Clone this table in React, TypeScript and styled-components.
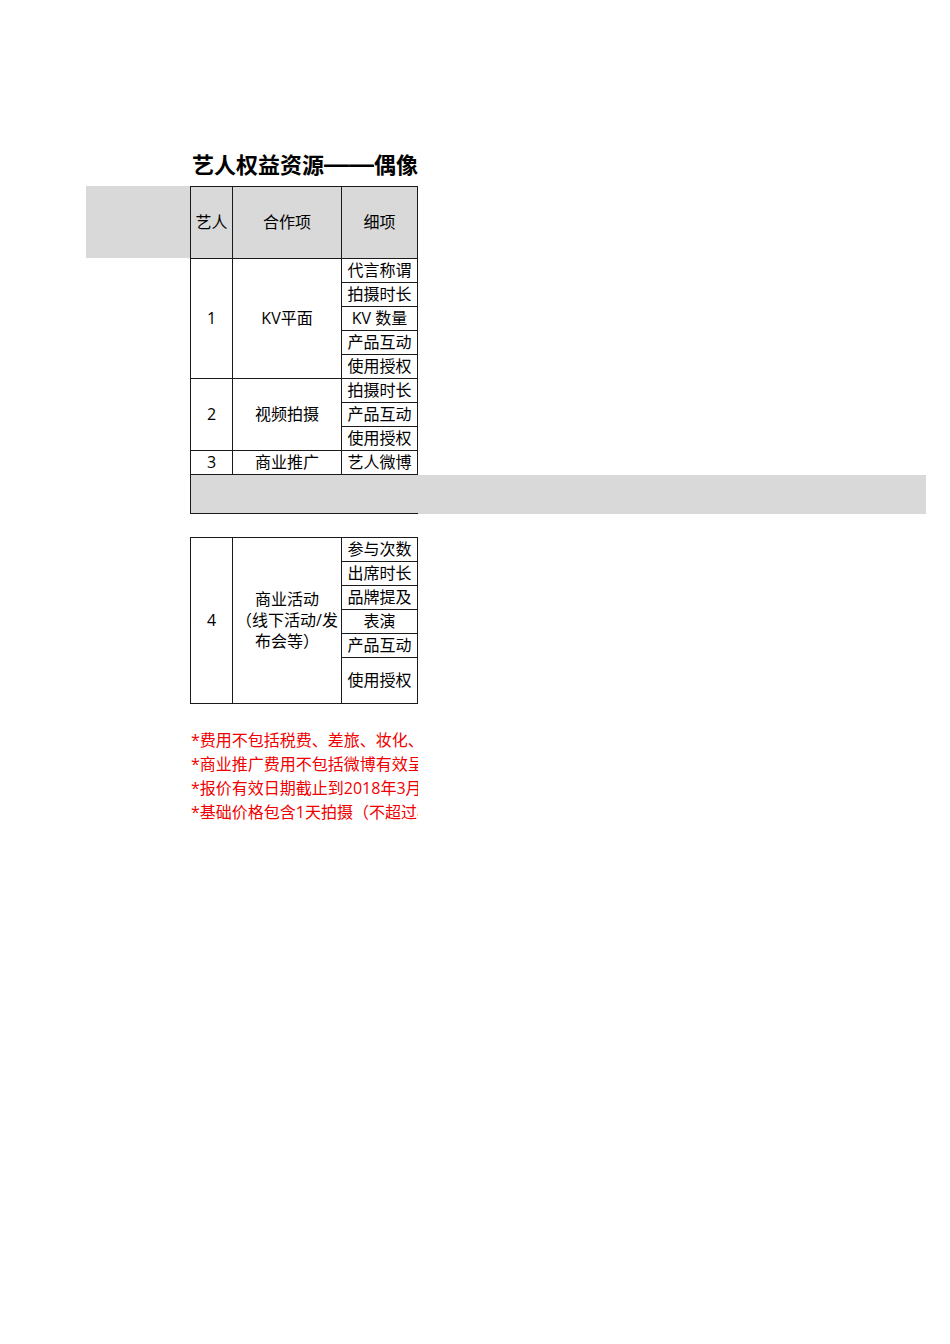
import styled, { createGlobalStyle } from "styled-components";

const GlobalStyle = createGlobalStyle`
  body {
    margin: 0;
    background: #fff;
    font-family: "Open Sans", "Noto Sans CJK SC", sans-serif;
    color: #000;
  }
`;

const Page = styled.div`
  padding: 150px 0 0 86px;
  width: 950px;
  height: 1344px;
  box-sizing: border-box;
`;

const Title = styled.div`
  margin-left: 104px;
  padding-left: 2px;
  width: 228px;
  height: 36px;
  box-sizing: border-box;
  overflow: hidden;
  white-space: nowrap;
  font-family: "Noto Sans CJK SC", sans-serif;
  font-size: 22px;
  font-weight: 700;
  line-height: 26px;
`;

const Dash = styled.span`
  font-family: "Liberation Sans", sans-serif;
  font-size: 25px;
  font-weight: 700;
`;

const TableRow = styled.div`
  display: flex;
  align-items: flex-start;
`;

const Shade = styled.div`
  width: 104px;
  height: 72px;
  background: #d9d9d9;
`;

const Grid = styled.div<{ $rows: string; $offset?: boolean }>`
  display: grid;
  grid-template-columns: 42px 109px 76px;
  grid-template-rows: ${(p) => p.$rows};
  width: 228px;
  box-sizing: border-box;
  border-top: 1px solid #1a1a1a;
  border-left: 1px solid #1a1a1a;
  margin-left: ${(p) => (p.$offset ? "104px" : "0")};
`;

const Cell = styled.div<{ $span?: number; $shade?: boolean }>`
  grid-row: span ${(p) => p.$span ?? 1};
  display: flex;
  align-items: center;
  justify-content: center;
  text-align: center;
  box-sizing: border-box;
  border-right: 1px solid #1a1a1a;
  border-bottom: 1px solid #1a1a1a;
  background: ${(p) => (p.$shade ? "#d9d9d9" : "#fff")};
  font-size: 16px;
  line-height: 21px;
  white-space: nowrap;
  overflow: hidden;
`;

const Band = styled.div`
  margin-left: 104px;
  width: 736px;
  height: 39px;
  background: #d9d9d9;
`;

const BandCell = styled.div`
  width: 228px;
  height: 100%;
  box-sizing: border-box;
  border-left: 1px solid #1a1a1a;
  border-bottom: 1px solid #1a1a1a;
`;

const Gap = styled.div`
  height: 23px;
`;

const Notes = styled.div`
  margin: 24px 0 0 104px;
  width: 228px;
  overflow: hidden;
  white-space: nowrap;
  padding-left: 1px;
  box-sizing: border-box;
`;

const Note = styled.div`
  color: #f00000;
  font-size: 16px;
  line-height: 24px;
`;

const notes = [
  "*费用不包括税费、差旅、妆化、造型等费用",
  "*商业推广费用不包括微博有效呈现的相关费用",
  "*报价有效日期截止到2018年3月31日",
  "*基础价格包含1天拍摄（不超过8小时）",
];

export default function App() {
  return (
    <Page>
      <GlobalStyle />
      <Title>
        艺人权益资源<Dash>——</Dash>偶像
      </Title>
      <TableRow>
        <Shade />
        <Grid $rows="72px repeat(9, 24px)">
          <Cell $shade>艺人</Cell>
          <Cell $shade>合作项</Cell>
          <Cell $shade>细项</Cell>

          <Cell $span={5}>1</Cell>
          <Cell $span={5}>KV平面</Cell>
          <Cell>代言称谓</Cell>
          <Cell>拍摄时长</Cell>
          <Cell>KV 数量</Cell>
          <Cell>产品互动</Cell>
          <Cell>使用授权</Cell>

          <Cell $span={3}>2</Cell>
          <Cell $span={3}>视频拍摄</Cell>
          <Cell>拍摄时长</Cell>
          <Cell>产品互动</Cell>
          <Cell>使用授权</Cell>

          <Cell>3</Cell>
          <Cell>商业推广</Cell>
          <Cell>艺人微博</Cell>
        </Grid>
      </TableRow>
      <Band>
        <BandCell />
      </Band>
      <Gap />
      <Grid $rows="repeat(5, 24px) 46px" $offset>
        <Cell $span={6}>4</Cell>
        <Cell $span={6}>
          商业活动
          <br />
          （线下活动/发
          <br />
          布会等）
        </Cell>
        <Cell>参与次数</Cell>
        <Cell>出席时长</Cell>
        <Cell>品牌提及</Cell>
        <Cell>表演</Cell>
        <Cell>产品互动</Cell>
        <Cell>使用授权</Cell>
      </Grid>
      <Notes>
        {notes.map((n) => (
          <Note key={n}>{n}</Note>
        ))}
      </Notes>
    </Page>
  );
}
